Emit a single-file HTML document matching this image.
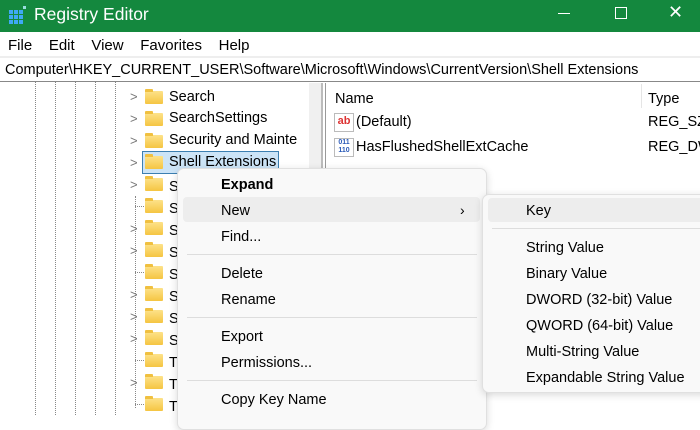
<!DOCTYPE html><html><head><style>
body{margin:0;width:700px;height:415px;overflow:hidden;background:#fff;font-family:"Liberation Sans",sans-serif;font-size:14px;color:#000;position:relative}
.a{position:absolute;white-space:nowrap}
.fold{position:absolute;width:18px;height:13px;background:linear-gradient(#fde28a,#f5c542);border-radius:1px}
.fold:before{content:"";position:absolute;left:0;top:-2px;width:8px;height:3px;background:#f0c040;border-radius:1px 1px 0 0}
.chev{position:absolute;left:130px;color:#777;font-size:13px}
.dot{position:absolute;top:82px;height:333px;border-left:1px dotted #888}
.hd{position:absolute;left:135px;width:9px;border-top:1px dotted #888}
.mi{position:absolute;left:221px;font-size:14.5px}
.si{position:absolute;left:526px;font-size:14.5px}
.sep{position:absolute;height:1px;background:#ddd}
</style></head><body>
<div class="a" style="left:0;top:0;width:700px;height:32px;background:#14883e"></div>
<svg class="a" style="left:8px;top:5px" width="20" height="20"><g fill="#3fa9f5"><rect x="1" y="5" width="4" height="4"/><rect x="6" y="5" width="4" height="4"/><rect x="11" y="5" width="4" height="4"/><rect x="1" y="10" width="4" height="4"/><rect x="6" y="10" width="4" height="4"/><rect x="11" y="10" width="4" height="4"/><rect x="1" y="15" width="4" height="4"/><rect x="6" y="15" width="4" height="4"/><rect x="11" y="15" width="4" height="4"/><rect x="15" y="1" width="3" height="3" fill="#9dd"/></g></svg>
<div class="a" style="left:34px;top:4px;color:#fff;font-size:17.5px">Registry Editor</div>
<div class="a" style="left:558px;top:13px;width:12px;height:1px;background:#fff"></div>
<div class="a" style="left:615px;top:7px;width:10px;height:10px;border:1px solid #fff"></div>
<div class="a" style="left:668px;top:2px;color:#fff;font-size:18px">✕</div>
<div class="a" style="left:8px;top:37px;font-size:15px">File&nbsp;&nbsp;&nbsp;&nbsp;Edit&nbsp;&nbsp;&nbsp;&nbsp;View&nbsp;&nbsp;&nbsp;&nbsp;Favorites&nbsp;&nbsp;&nbsp;&nbsp;Help</div>
<div class="a" style="left:0;top:56px;width:700px;height:2px;background:#eee"></div>
<div class="a" style="left:0;top:58px;width:700px;height:23px;border-bottom:1px solid #888"></div>
<div class="a" style="left:5px;top:62px;font-size:14.5px">Computer\HKEY_CURRENT_USER\Software\Microsoft\Windows\CurrentVersion\Shell Extensions</div>
<div class="a" style="left:309px;top:83px;width:12px;height:332px;background:#f0f0f0"></div>
<div class="a" style="left:321px;top:83px;width:2px;height:332px;background:#bbb"></div>
<div class="a" style="left:325px;top:83px;width:1px;height:332px;background:#999"></div>
<div class="dot" style="left:35px"></div><div class="dot" style="left:55px"></div><div class="dot" style="left:75px"></div><div class="dot" style="left:95px"></div><div class="dot" style="left:115px"></div>
<div class="a" style="left:135px;top:196px;height:212px;border-left:1px dotted #888"></div>
<div class="hd" style="top:206px"></div><div class="hd" style="top:272px"></div><div class="hd" style="top:360px"></div><div class="hd" style="top:404px"></div>
<div class="a" style="left:142px;top:151px;width:135px;height:21px;background:#cce4f7;border:1px solid #3c7fb1"></div>
<div class="chev" style="top:89px">&gt;</div><div class="chev" style="top:111px">&gt;</div><div class="chev" style="top:133px">&gt;</div><div class="chev" style="top:155px">&gt;</div><div class="chev" style="top:177px">&gt;</div><div class="chev" style="top:221px">&gt;</div><div class="chev" style="top:243px">&gt;</div><div class="chev" style="top:287px">&gt;</div><div class="chev" style="top:309px">&gt;</div><div class="chev" style="top:331px">&gt;</div><div class="chev" style="top:375px">&gt;</div>
<div class="fold" style="left:145px;top:91px"></div><div class="fold" style="left:145px;top:113px"></div><div class="fold" style="left:145px;top:135px"></div><div class="fold" style="left:145px;top:156px"></div><div class="fold" style="left:145px;top:178px"></div><div class="fold" style="left:145px;top:200px"></div><div class="fold" style="left:145px;top:222px"></div><div class="fold" style="left:145px;top:244px"></div><div class="fold" style="left:145px;top:266px"></div><div class="fold" style="left:145px;top:288px"></div><div class="fold" style="left:145px;top:310px"></div><div class="fold" style="left:145px;top:332px"></div><div class="fold" style="left:145px;top:354px"></div><div class="fold" style="left:145px;top:376px"></div><div class="fold" style="left:145px;top:398px"></div>
<div class="a" style="left:169px;top:89px;font-size:14.5px">Search</div>
<div class="a" style="left:169px;top:110px;font-size:14.5px">SearchSettings</div>
<div class="a" style="left:169px;top:132px;font-size:14.5px">Security and Mainte</div>
<div class="a" style="left:169px;top:154px;font-size:14.5px">Shell Extensions</div>
<div class="a" style="left:169px;top:176px;font-size:14.5px;line-height:22px">S<br>S<br>S<br>S<br>S<br>S<br>S<br>S<br>T<br>T<br>T</div>
<div class="a" style="left:335px;top:91px;font-size:14.5px">Name</div>
<div class="a" style="left:641px;top:84px;width:1px;height:24px;background:#e5e5e5"></div>
<div class="a" style="left:648px;top:91px;font-size:14.5px">Type</div>
<div class="a" style="left:334px;top:113px;width:18px;height:17px;border:1px solid #bbb;background:#fff;color:#d33;font-weight:bold;font-size:11px;line-height:15px;text-align:center">ab</div>
<div class="a" style="left:356px;top:114px;font-size:14.5px">(Default)</div>
<div class="a" style="left:648px;top:114px;font-size:14.5px">REG_SZ</div>
<div class="a" style="left:334px;top:138px;width:18px;height:17px;border:1px solid #bbb;background:#fff;color:#2a5ab8;font-weight:bold;font-size:7px;line-height:8px;text-align:center">011<br>110</div>
<div class="a" style="left:356px;top:139px;font-size:14.5px">HasFlushedShellExtCache</div>
<div class="a" style="left:648px;top:139px;font-size:14.5px">REG_DW</div>
<div class="a" style="left:177px;top:168px;width:308px;height:260px;background:#f9f9f9;border:1px solid #e0e0e0;border-radius:7px;box-shadow:0 2px 8px rgba(0,0,0,.15)"></div>
<div class="a" style="left:183px;top:197px;width:297px;height:25px;background:#ededed;border-radius:4px"></div>
<div class="mi" style="top:177px;font-weight:bold">Expand</div>
<div class="mi" style="top:203px">New</div>
<div class="a" style="left:460px;top:202px;font-size:14px">›</div>
<div class="mi" style="top:229px">Find...</div>
<div class="sep" style="left:187px;top:254px;width:290px"></div>
<div class="mi" style="top:266px">Delete</div>
<div class="mi" style="top:292px">Rename</div>
<div class="sep" style="left:187px;top:317px;width:290px"></div>
<div class="mi" style="top:329px">Export</div>
<div class="mi" style="top:355px">Permissions...</div>
<div class="sep" style="left:187px;top:380px;width:290px"></div>
<div class="mi" style="top:392px">Copy Key Name</div>
<div class="a" style="left:482px;top:194px;width:230px;height:197px;background:#f9f9f9;border:1px solid #e0e0e0;border-radius:7px;box-shadow:0 2px 8px rgba(0,0,0,.15)"></div>
<div class="a" style="left:488px;top:198px;width:220px;height:24px;background:#ededed;border-radius:4px"></div>
<div class="si" style="top:203px">Key</div>
<div class="sep" style="left:492px;top:228px;width:210px"></div>
<div class="si" style="top:240px">String Value</div>
<div class="si" style="top:266px">Binary Value</div>
<div class="si" style="top:292px">DWORD (32-bit) Value</div>
<div class="si" style="top:318px">QWORD (64-bit) Value</div>
<div class="si" style="top:344px">Multi-String Value</div>
<div class="si" style="top:370px">Expandable String Value</div>
</body></html>
